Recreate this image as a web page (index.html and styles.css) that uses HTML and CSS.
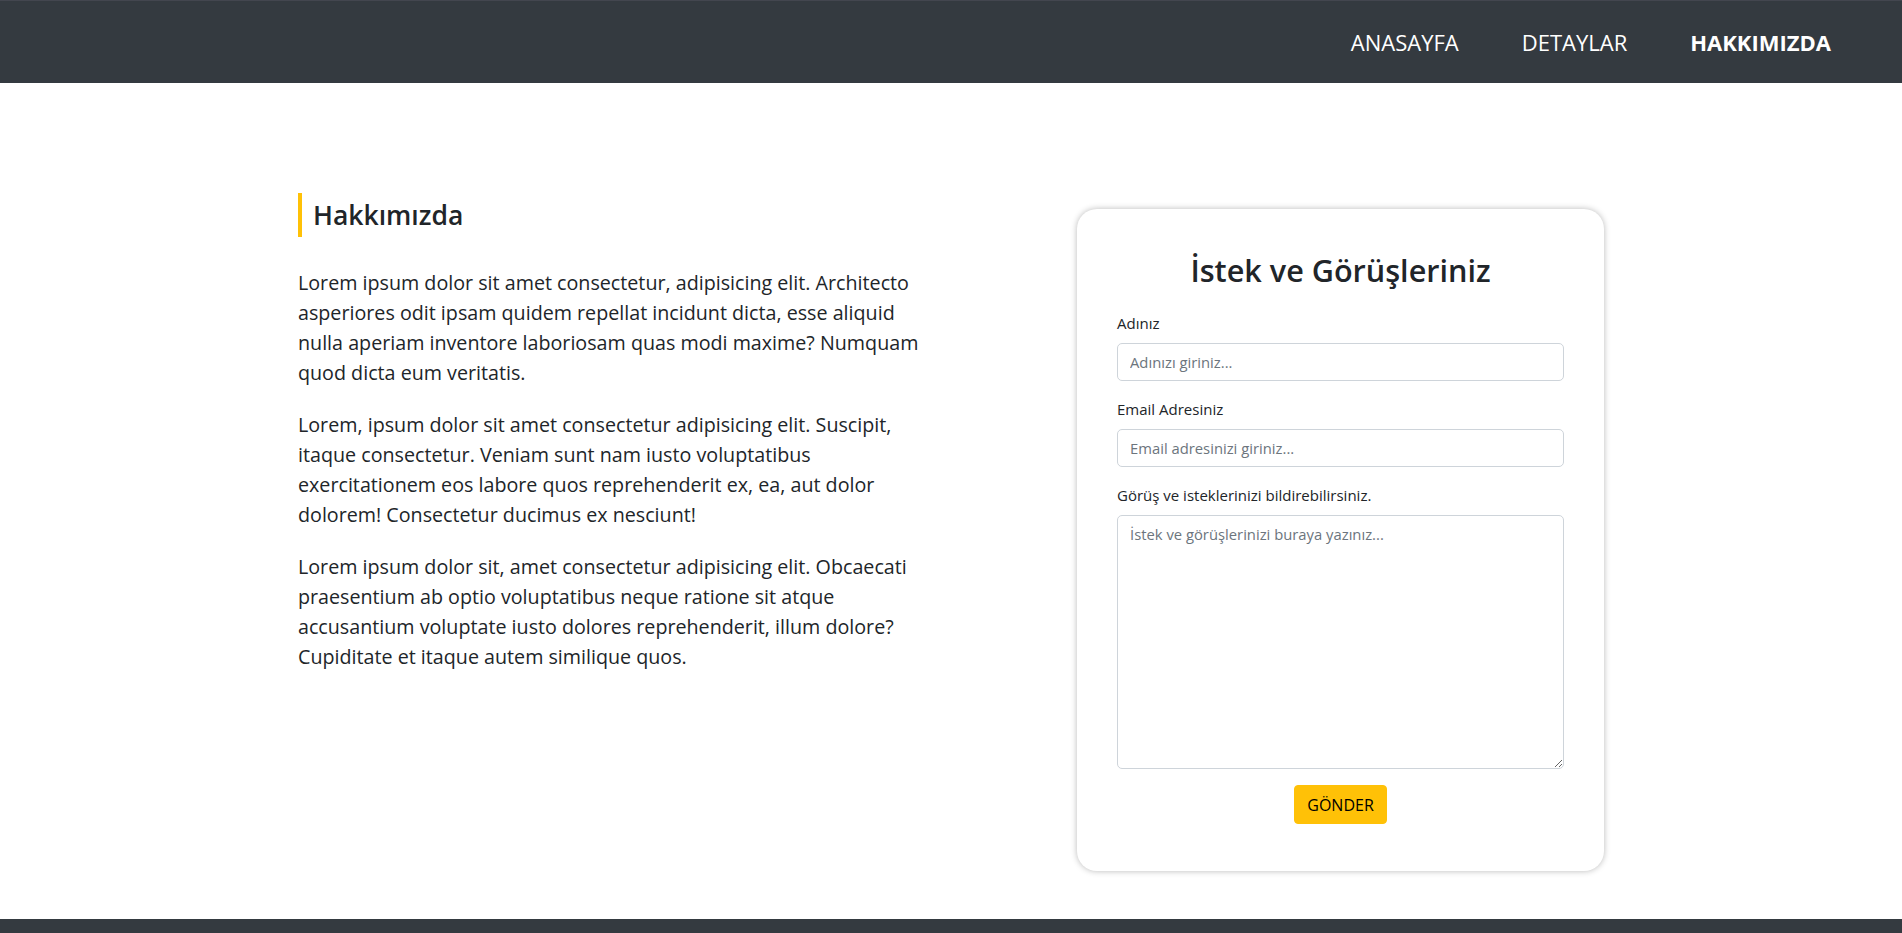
FILE: index.html
```html
<!DOCTYPE html>
<html lang="tr">
<head>
<meta charset="utf-8">
<title>Hakkımızda</title>
<link rel="stylesheet" href="styles.css">
</head>
<body>
<header class="navbar">
  <nav class="nav">
    <a class="nav-link" href="#">ANASAYFA</a>
    <a class="nav-link" href="#">DETAYLAR</a>
    <a class="nav-link active" href="#">HAKKIMIZDA</a>
  </nav>
</header>
<main class="container">
  <section class="about">
    <h3 class="about-title">Hakkımızda</h3>
    <p>Lorem ipsum dolor sit amet consectetur, adipisicing elit. Architecto asperiores odit ipsam quidem repellat incidunt dicta, esse aliquid nulla aperiam inventore laboriosam quas modi maxime? Numquam quod dicta eum veritatis.</p>
    <p>Lorem, ipsum dolor sit amet consectetur adipisicing elit. Suscipit, itaque consectetur. Veniam sunt nam iusto voluptatibus exercitationem eos labore quos reprehenderit ex, ea, aut dolor dolorem! Consectetur ducimus ex nesciunt!</p>
    <p>Lorem ipsum dolor sit, amet consectetur adipisicing elit. Obcaecati praesentium ab optio voluptatibus neque ratione sit atque accusantium voluptate iusto dolores reprehenderit, illum dolore? Cupiditate et itaque autem similique quos.</p>
  </section>
  <section class="card">
    <h2 class="card-title">İstek ve Görüşleriniz</h2>
    <form class="form">
      <div class="field">
        <label class="label" for="ad">Adınız</label>
        <input class="control" id="ad" type="text" placeholder="Adınızı giriniz...">
      </div>
      <div class="field">
        <label class="label" for="email">Email Adresiniz</label>
        <input class="control" id="email" type="email" placeholder="Email adresinizi giriniz...">
      </div>
      <div class="field">
        <label class="label" for="mesaj">Görüş ve isteklerinizi bildirebilirsiniz.</label>
        <textarea class="control textarea" id="mesaj" placeholder="İstek ve görüşlerinizi buraya yazınız..."></textarea>
      </div>
      <div class="actions">
        <button class="btn" type="button">GÖNDER</button>
      </div>
    </form>
  </section>
</main>
<footer class="footer"></footer>
</body>
</html>
```
FILE: styles.css
```css
* { box-sizing: border-box; }
html, body { margin: 0; padding: 0; }
body {
  font-family: "Open Sans", "Noto Sans", sans-serif;
  color: #212529;
  background: #fff;
}
.navbar {
  height: 83px;
  background: #343a40;
  border-top: 1px solid #43464f;
  display: flex;
  justify-content: flex-end;
  align-items: center;
  padding-right: 71px;
}
.nav {
  display: flex;
  gap: 63px;
}
.nav-link {
  color: #fff;
  text-decoration: none;
  font-size: 22px;
  line-height: 30px;
}
.nav-link.active { font-weight: 700; }

.container {
  width: 1306px;
  margin: 0 auto;
  padding-top: 110px;
  padding-bottom: 48px;
  display: flex;
  justify-content: space-between;
  align-items: flex-start;
}
.about { width: 636px; }
.about-title {
  margin: 0 0 31px 0;
  border-left: 4px solid #ffc107;
  padding-left: 11px;
  height: 44px;
  line-height: 44px;
  font-size: 26.5px;
  font-weight: 600;
}
.about p {
  margin: 0 0 22px 0;
  font-size: 19.7px;
  line-height: 30px;
}

.card {
  width: 527px;
  margin-top: 16px;
  padding: 42px 40px 47px;
  border-radius: 20px;
  box-shadow: 0 0 6px rgba(0, 0, 0, 0.28);
  background: #fff;
}
.card-title {
  margin: 0 0 22px 0;
  text-align: center;
  font-size: 30.6px;
  line-height: 38px;
  font-weight: 600;
}
.form { display: flex; flex-direction: column; }
.field {
  display: flex;
  flex-direction: column;
  margin-bottom: 16px;
}
.label {
  font-size: 15px;
  line-height: 24px;
  margin-bottom: 8px;
}
.control {
  width: 100%;
  height: 38px;
  border: 1px solid #ced4da;
  border-radius: 5px;
  padding: 6px 12px;
  font-family: inherit;
  font-size: 14.8px;
  color: #212529;
}
.control::placeholder { color: #6c757d; }
.textarea {
  height: 254px;
  resize: vertical;
  line-height: 24px;
}
.actions {
  display: flex;
  justify-content: center;
}
.btn {
  height: 39px;
  padding: 0 12px;
  background: #ffc107;
  border: 1px solid #ffc107;
  border-radius: 4px;
  font-family: inherit;
  font-size: 16px;
  color: #000;
  cursor: pointer;
}
.footer {
  height: 16px;
  background: #343a40;
}
```
